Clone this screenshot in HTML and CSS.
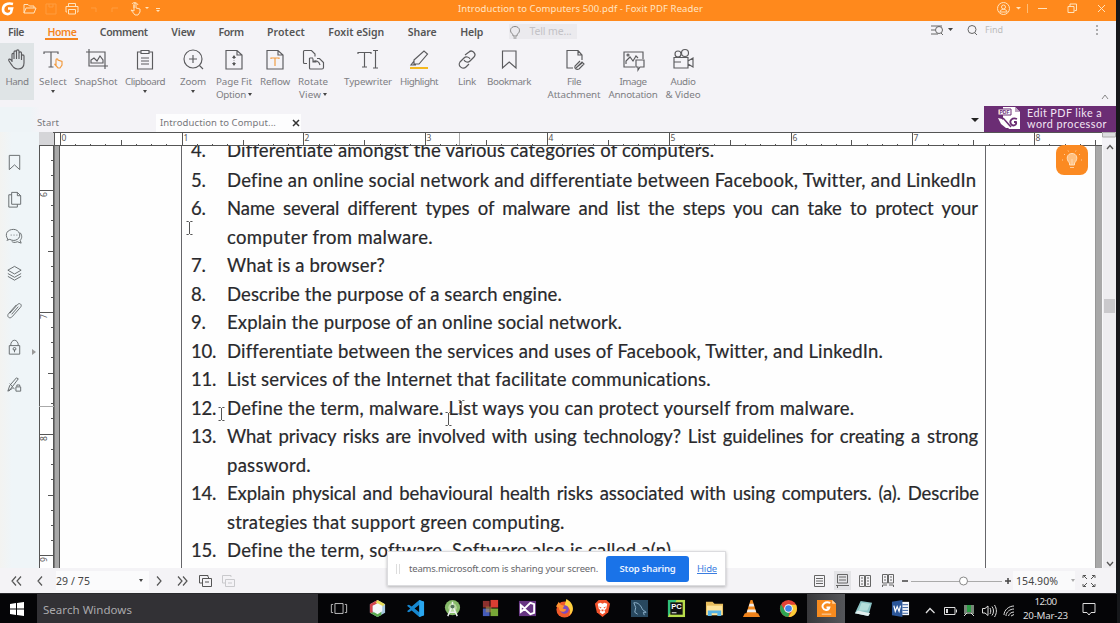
FILE: index.html
```html
<!DOCTYPE html>
<html lang="en">
<head>
<meta charset="utf-8">
<title>Introduction to Computers 500.pdf - Foxit PDF Reader</title>
<link rel="stylesheet" href="styles.css">
</head>
<body>
<div class="screen">
<div class="window">
  <header class="titlebar">
    <svg class="quick" width="165" height="21" viewBox="0 0 165 21" fill="none" stroke="#ffe3bd" stroke-width="1">
      <path d="M13 4C7 2.500 3 5 3 9.500C3 14 8.500 15.500 11 12.500L12 8.500H8" stroke="#fff" stroke-width="2.600"/>
      <path d="M24 13V4.500H28L29.500 6H34V8M24 13L26 8H36L34 13Z"/>
      <g stroke="#ff9c3e"><path d="M46 4H56V14H46ZM49 4V7H53V4M91 8H96V12M112 12V8H118"/></g>
      <path d="M68.500 6V3.500H75.500V6M67 12H66V6.500H78V12H77M68.500 9.500H75.500V14H68.500Z"/>
      <path d="M134 8V4C134 3 136 3 136 4V8L140 9V12L138 15H135L131 10L134 11V5M132 4C133 2 137 2 138 5"/>
      <path d="M145 7H149L147 9Z M156 10H160L158 12Z" fill="#ffe3bd" stroke="none"/><path d="M156 8.500H160"/>
    </svg>
    <span class="title" data-w="245">Introduction to Computers 500.pdf - Foxit PDF Reader</span>
    <svg class="controls" width="120" height="21" viewBox="996 0 120 21" fill="none" stroke="#ffe3bd" stroke-width="1">
      <circle cx="1003.500" cy="8.500" r="6"/><circle cx="1003.500" cy="7" r="2"/><path d="M1000 12C1000 8.500 1007 8.500 1007 12Z"/>
      <path d="M1016 7H1021L1018.500 9.500Z" fill="#ffe3bd" stroke="none"/><path d="M1027.500 4V13" stroke="#ffbd75"/>
      <path d="M1038 8.500H1047M1068 6.500H1074V12.500H1068ZM1070 6V4H1076.500V10.500H1074.500M1098 5L1105 12M1105 5L1098 12"/>
    </svg>
  </header>

  <nav class="menu">
    <span data-w="16">File</span><span class="on" data-w="29">Home</span><span data-w="48">Comment</span><span data-w="24">View</span><span data-w="25">Form</span><span data-w="38">Protect</span><span data-w="56">Foxit eSign</span><span data-w="29">Share</span><span data-w="23">Help</span>
    <div class="tell"><svg width="12" height="14" viewBox="0 0 12 14" fill="none" stroke="#888"><path d="M4 9.500C0 7 1 1.500 6 1.500S12 7 8 9.500V11H4ZM4.500 13H7.500"/></svg><em data-w="42">Tell me...</em></div>
    <svg class="find" width="200" height="20" viewBox="916 22 200 20" fill="none" stroke="#666">
      <path d="M931 27H942M931 31H935M931 35H938"/><circle cx="939" cy="31" r="3.500"/><path d="M941 34L943 36"/><path d="M948 29H953L950.500 32Z" fill="#444" stroke="none"/>
      <circle cx="972" cy="30.500" r="4"/><path d="M975 34L977 36"/><path d="M1097 26V28M1097 30V32M1097 34V36"/>
      <text x="985" y="34" class="hint">Find</text>
    </svg>
  </nav>

  <section class="ribbon">
    <div class="tool on"><svg viewBox="0 0 24 24"><path d="M7 14V6.500C7 5 9 5 9 6.500V11V4C9 2.500 11.500 2.500 11.500 4V11V3C11.500 1.500 14 1.500 14 3V11V5C14 3.500 16.500 3.500 16.500 5V12V8C16.500 6.500 19 6.500 19 8V15C19 19 17 21 13 21C9 21 8 19 4 13C3 11 5 10 7 13"/></svg><span data-w="23">Hand</span></div>
    <div class="tool"><svg viewBox="0 0 24 24"><path d="M3 6V4H17V6M10 4V19M7.500 19H12.500"/><path stroke="#f29a3d" d="M15 18V12C15 10.500 17 10.500 17 12L21 13.500V17L19 20H17L13.500 16L15 17"/></svg><span data-w="28">Select</span><b></b></div>
    <div class="tool"><svg viewBox="0 0 24 24"><path d="M5 1V18H24M2 4H21V21M7 15V12L10 10L13 13L16 8L19 12V15Z"/></svg><span data-w="43">SnapShot</span></div>
    <div class="tool"><svg viewBox="0 0 24 24"><path d="M8 4H4.500V21H19.500V4H16M8 2.500H16V5.500H8ZM8 10H16M8 13H16M8 16H16"/></svg><span data-w="40">Clipboard</span><b></b></div>
    <div class="tool"><svg viewBox="0 0 24 24"><circle cx="12" cy="11" r="9"/><path d="M8 11H16M12 7V15M18.500 17.500L22 21"/></svg><span data-w="26">Zoom</span><b></b></div>
    <div class="tool"><svg viewBox="0 0 24 24"><path d="M4 2.500H15L20 7V21H4ZM15 2.500V7H20M12 8V11M12 14V17M12 12.200V12.800"/><path d="M10 10L12 7L14 10ZM10 15L12 18L14 15Z" fill="#555" stroke="none"/></svg><span data-w="36">Page Fit</span><span class="more"><i data-w="30">Option</i><b></b></span></div>
    <div class="tool"><svg viewBox="0 0 24 24"><path d="M4 2.500H15L20 7V21H4ZM15 2.500V7H20"/><path stroke="#f29a3d" d="M8 11V10H16V11M12 10V18"/></svg><span data-w="30">Reflow</span></div>
    <div class="tool"><svg viewBox="0 0 24 24"><path d="M6 15.500H3.500Q2.500 15.500 2.500 14.500V3.500Q2.500 2.500 3.500 2.500H10.500L14 6V8.500M8.500 10V20Q8.500 21 9.500 21H21Q22.500 21 22.500 19.500V14.500L18.500 10.500H16M8.500 10L12 10M19 17C18 13 15 12 12 13.500M12 10.500V14H15.500"/></svg><span data-w="30">Rotate</span><span class="more"><i data-w="22">View</i><b></b></span></div>
    <div class="tool"><svg viewBox="0 0 24 24"><path d="M2 6V4.500H15V6M8.500 4.500V19M6 19H11M17 2.500H22M19.500 2.500V20M17 20H22"/></svg><span data-w="48">Typewriter</span></div>
    <div class="tool"><svg viewBox="0 0 24 24"><path d="M7 12L17 3L20.500 6L12 16H7ZM7 13L4 17H9"/><path stroke="#f5b921" stroke-width="2" d="M3 20H21"/></svg><span data-w="38">Highlight</span></div>
    <div class="tool"><svg viewBox="0 0 24 24"><path d="M10 7L14 4C17 1 22 6 19 9L15 13C13 15 10 14 9 12M14 16L11 19C8 22 2 18 5 14L9 10C11 8 14 9 15 11"/></svg><span data-w="18">Link</span></div>
    <div class="tool"><svg viewBox="0 0 24 24"><path d="M5.500 3H19V20L12.200 14L5.500 20Z"/></svg><span data-w="44">Bookmark</span></div>
    <div class="tool"><svg viewBox="0 0 24 24"><path d="M11 20H5V2.500H16L20 7V12M16 2.500V7H20M14 20L20 14L22 16L17 21C15 22 12 21 13 18L18 13M15 19L20 15"/></svg><span data-w="14">File</span><span data-w="53">Attachment</span></div>
    <div class="tool"><svg viewBox="0 0 24 24"><path d="M14 19H3V4H22V11M5 16V13L9 9L12 13L15 8L17 10M15 12H23V19H19L17 22V19H15Z"/><circle cx="7" cy="7" r="1"/></svg><span data-w="27">Image</span><span data-w="49">Annotation</span></div>
    <div class="tool"><svg viewBox="0 0 24 24"><circle cx="7" cy="6" r="3"/><circle cx="14" cy="5" r="3.500"/><path d="M3 9.500H17V20H3ZM17 13L22 10V19L17 16M3 14H10"/></svg><span data-w="25">Audio</span><span data-w="35">&amp; Video</span></div>
    <svg class="fold" width="8" height="6" viewBox="0 0 8 6"><path d="M1 5L4 1L7 5" fill="none" stroke="#888"/></svg>
  </section>

  <section class="tabs">
    <span class="start" data-w="22">Start</span>
    <div class="tab"><span data-w="116">Introduction to Comput...</span><svg width="8" height="8" viewBox="0 0 8 8"><path d="M1 1L7 7M7 1L1 7" stroke="#333" stroke-width="1.500"/></svg></div>
    <div class="arrow"></div>
    <div class="promo">
      <svg width="24" height="24" viewBox="0 0 24 24"><path d="M6 1H18L23 6V23H12L6 15Z" fill="#fff"/><path d="M1 3H14V9H1Z" fill="#fff" stroke="#6b2d74"/><text x="2.500" y="8.200" class="pdf">PDF</text><path d="M1 12L5 13L13 22H9L4 18Z" fill="#fff"/><path d="M6 12L14 21" stroke="#6b2d74" stroke-width="1.500"/><path d="M20 13C15 11 12 15 14 18S20 19 19 16H17" fill="none" stroke="#6b2d74" stroke-width="1.800"/><path d="M18 1V6H23" fill="#bda2c1"/></svg>
      <p><span data-w="75">Edit PDF like a</span><br><span data-w="80">word processor</span></p>
    </div>
  </section>

  <main class="work">
    <aside class="side">
      <svg viewBox="0 0 20 20"><path d="M4.500 2.500H15.500V17.500L10 12.500L4.500 17.500Z"/></svg>
      <svg viewBox="0 0 20 20"><path d="M7 2.500H13L16.500 6V15H7ZM13 2.500V6H16.500M7 5H4V18H13V15"/></svg>
      <svg viewBox="0 0 20 20"><path d="M3 13C-1 7 3 2.500 9 2.500C15 2.500 18 10 13 13C10 15 7 14 5 13L2 14ZM16 6C19 10 17 13 16 14L17 17L13 15.500C10 17 8 16 7 15M6 8.500H7M9 8.500H10M12 8.500H13"/></svg>
      <svg viewBox="0 0 20 20"><path d="M10 2.500L17 6.500L10 10.500L3 6.500ZM3 10L10 14L17 10M3 13L10 17L17 13"/></svg>
      <svg viewBox="0 0 20 20"><path d="M5 13L13 4C15 1 19 4 16 7L8 16C5 20 1 16 4 13L12 4M7 14L14 6"/></svg>
      <svg viewBox="0 0 20 20"><path d="M4.500 8H15.500V17H4.500ZM6 8C6 0.500 14 0.500 14 8M10 12V15"/><circle cx="10" cy="11.500" r="1.500"/></svg>
      <svg viewBox="0 0 20 20"><path d="M3 17L5 11L12 3L14 4L8 12L4 17M5 9L10 15M3 17L8 14M11.500 12.500H16.500V17H11.500ZM12.500 12V10.500H15.500V12"/></svg>
      <div class="grip"></div>
    </aside>
    <div class="view">
      <svg class="hruler" id="hruler" width="1077" height="14" viewBox="39 132 1077 14"></svg>
      <div class="pane">
        <svg class="vruler" id="vruler" width="15" height="422" viewBox="39 146 15 422"></svg>
        <div class="edge left"></div>
        <article class="page">
          <ol class="questions">
            <li class="first"><span>4.</span><p data-w="487">Differentiate amongst the various categories of computers.</p></li>
            <li><span>5.</span><p data-w="748">Define an online social network and differentiate between Facebook, Twitter, and LinkedIn</p></li>
            <li><span>6.</span><p data-w="751" class="spread">Name several different types of malware and list the steps you can take to protect your</p></li>
            <li><span></span><p data-w="206">computer from malware.</p></li>
            <li><span>7.</span><p data-w="158">What is a browser?</p></li>
            <li><span>8.</span><p data-w="335">Describe the purpose of a search engine.</p></li>
            <li><span>9.</span><p data-w="395">Explain the purpose of an online social network.</p></li>
            <li><span>10.</span><p data-w="655">Differentiate between the services and uses of Facebook, Twitter, and LinkedIn.</p></li>
            <li><span>11.</span><p data-w="484">List services of the Internet that facilitate communications.</p></li>
            <li><span>12.</span><p data-w="627">Define the term, malware. List ways you can protect yourself from malware.</p></li>
            <li><span>13.</span><p data-w="751" class="spread">What privacy risks are involved with using technology? List guidelines for creating a strong</p></li>
            <li><span></span><p data-w="84">password.</p></li>
            <li><span>14.</span><p data-w="752" class="spread">Explain physical and behavioural health risks associated with using computers. (a). Describe</p></li>
            <li><span></span><p data-w="338">strategies that support green computing.</p></li>
            <li><span>15.</span><p data-w="443">Define the term, software. Software also is called a(n)</p></li>
          </ol>
        </article>
        <div class="edge right"></div>
        <div class="scroll">
          <svg width="8" height="8" viewBox="0 0 8 8"><path d="M1 6L4 2.500L7 6" fill="none" stroke="#555" stroke-width="1.300"/></svg>
          <div class="thumb"></div>
          <svg width="8" height="8" viewBox="0 0 8 8"><path d="M1 2L4 5.500L7 2" fill="none" stroke="#555" stroke-width="1.300"/></svg>
        </div>
      </div>
    </div>
  </main>

  <footer class="status">
    <svg width="56" height="25" viewBox="0 568 56 25" fill="none" stroke="#555" stroke-width="1.200"><path d="M16 576.500L12 581L16 585.500M21 576.500L17 581L21 585.500M42 576.500L38 581L42 585.500"/></svg>
    <div class="pageno"><span data-w="34">29 / 75</span><b></b></div>
    <svg width="90" height="25" viewBox="149 568 90 25" fill="none" stroke="#555" stroke-width="1.200"><path d="M157 576.500L161 581L157 585.500M178 576.500L182 581L178 585.500M183 576.500L187 581L183 585.500"/><path stroke-width="1" d="M202 583H199.500V575.500H208V577M202.500 578.500H211.500V586.500H202.500ZM205 582H209M207 579L209 577"/><path stroke="#c9c9cc" stroke-width="1" d="M225 583H222.500V575.500H231V577M225.500 579.500H234.500V586.500H225.500ZM228 583H232"/></svg>
    <svg class="zoombar" width="204" height="25" viewBox="809 568 204 25" fill="none" stroke="#666">
      <path d="M814.500 575.500H824.500V586.500H814.500ZM816 578.500H823M816 581H823M816 583.500H823"/>
      <path d="M834 571H851V590H834Z" fill="#e3e3e6" stroke="none"/><path d="M837.500 574.500H847.500V583H837.500ZM839 577H846M839 580H846M836 585.500H849M837.500 588V586"/>
      <path d="M859.500 575.500H864.500V586.500H859.500ZM865.500 575.500H870.500V586.500H865.500ZM861 578H863M861 581H863M861 584H863M867 578H869M867 581H869M867 584H869"/>
      <path d="M882.500 574.500H887.500V583H882.500ZM888.500 574.500H893.500V583H888.500ZM884 577H886M884 580H886M890 577H892M890 580H892M882.500 587V585H887M893.500 587V585H889"/>
      <path stroke="#444" stroke-width="1.500" d="M902 581H908M1005 581H1011M1008 578V584"/><path stroke="#aaa" d="M911 581.500H1002"/><circle cx="963.500" cy="581" r="4" fill="#fff" stroke="#888"/>
    </svg>
    <div class="zoomval"><span data-w="42">154.90%</span><b></b></div>
    <svg width="16" height="16" viewBox="0 0 16 16" fill="none" stroke="#555"><path d="M2 5V2.500H5M2 2L6 6M11 2.500H14V5M14 2L10 6M2 11V13.500H5M2 14L6 10M14 11V13.500H11M14 14L10 10"/></svg>
  </footer>

  <button class="bulb"><svg width="22" height="22" viewBox="0 0 22 22" fill="#ffc080" stroke="#ffe0bd"><path d="M8.500 14C4.500 10 6 4.500 11 4.500S17.500 10 13.500 14V16H8.500Z"/><path d="M9 18.500H13M11 10V16M3 5L4 6M18 5L19 6M1 11H2M20 11H21M7 1.500L7.500 2.500M15 1.500L14.500 2.500" stroke-width=".8"/></svg></button>
  <svg class="ibeam a" viewBox="0 0 7 14"><path d="M0.500 0.500H2.500L3.500 1.500L4.500 0.500H6.500M3.500 1V13M0.500 13.500H2.500L3.500 12.500L4.500 13.500H6.500"/></svg>
  <svg class="ibeam b" viewBox="0 0 7 14"><path d="M0.500 0.500H2.500L3.500 1.500L4.500 0.500H6.500M3.500 1V13M0.500 13.500H2.500L3.500 12.500L4.500 13.500H6.500"/></svg>
  <svg class="ibeam c" viewBox="0 0 7 14"><path d="M0.500 0.500H2.500L3.500 1.500L4.500 0.500H6.500M3.500 1V13M0.500 13.500H2.500L3.500 12.500L4.500 13.500H6.500"/></svg>
  <svg class="ibeam d" viewBox="0 0 7 14"><path d="M0.500 0.500H2.500L3.500 1.500L4.500 0.500H6.500M3.500 1V13M0.500 13.500H2.500L3.500 12.500L4.500 13.500H6.500"/></svg>

  <div class="sharing">
    <div class="handle"></div>
    <span class="msg" data-w="189">teams.microsoft.com is sharing your screen.</span>
    <button><span data-w="56">Stop sharing</span></button>
    <a data-w="20">Hide</a>
  </div>
</div>

<div class="taskbar">
  <div class="winkey"><svg width="14" height="14" viewBox="0 0 14 14" fill="#fff"><path d="M0 2L6 1V6.500H0ZM7 1L14 0V6.500H7ZM0 7.500H6V13L0 12ZM7 7.500H14V14L7 13Z"/></svg></div>
  <div class="search"><span data-w="89">Search Windows</span></div>
  <div class="app tv"><svg viewBox="0 0 20 20" fill="none" stroke="#ccc"><path d="M5.500 4.500H14.500V15.500H5.500ZM3.500 5.500H1.500V14.500H3.500M16.500 5.500H18.500V14.500H16.500"/></svg></div>
  <div class="app"><svg viewBox="0 0 20 20"><path d="M10 1L18 5.500V14.500L10 19L2 14.500V5.500Z" fill="#a7c9df"/><path d="M10 1L2 5.500V14.500L5 15V7L11 5Z" fill="#d2434d"/><path d="M10 1L18 5.500L15 8L8 4Z" fill="#e6dc58"/><path d="M2 14.500L10 19L14 17V13L8 14Z" fill="#5cab4e"/><path d="M5 7L10 4.500L15 7V13L10 16L5 13Z" fill="#f5f8fa"/></svg></div>
  <div class="app"><svg viewBox="0 0 20 20"><path d="M14 1L19 3V17L14 19L6 12L3 14L1 13L4.500 10L1 7L3 6L6 8ZM14 6L9 10L14 14Z" fill="#1687cf" fill-rule="evenodd"/><path d="M14 1L19 3V17L14 19Z" fill="#2aa7ef"/></svg></div>
  <div class="app"><svg viewBox="0 0 20 20"><circle cx="10" cy="9" r="8" fill="#85b968"/><circle cx="10" cy="9" r="4.500" fill="#b9d9a0"/><path d="M10 7L5 18M10 7L15 18M6 14H14M10 3V8" stroke="#eef2f0" stroke-width="1.500"/><circle cx="10" cy="8" r="2" fill="#53705b"/></svg></div>
  <div class="app"><svg viewBox="0 0 20 20"><path d="M2 2H9V9H2Z" fill="#8c302e"/><path d="M10 1H18V9H10Z" fill="#d93e33"/><path d="M2 10H9V18H2Z" fill="#455bb8"/><path d="M10 10H18V18H10Z" fill="#78a737"/><path d="M5 8H11V14H5Z" fill="#c5a04d" opacity=".5"/></svg></div>
  <div class="app"><svg viewBox="0 0 20 20"><path d="M1 2H19V18H1Z" fill="#673582"/><path d="M3 6.500L7 10L13 4L17 5.500V14.500L13 16L7 10.500L3 13.500Z" fill="none" stroke="#fff" stroke-width="2"/></svg></div>
  <div class="app"><svg viewBox="0 0 20 20"><circle cx="10" cy="11" r="8.500" fill="#f05a2a"/><path d="M12 0C20 4 21 13 15 17C18 10 13 7 10 7Z" fill="#ffd13e"/><circle cx="10" cy="11" r="4.500" fill="#7d4cc1"/><path d="M1 8L4 3L6 6L10 7L8 10L12 11C10 15 4 14 4 9Z" fill="#ff9331"/></svg></div>
  <div class="app"><svg viewBox="0 0 20 20"><path d="M6 1H14L18 5L16 14L10 19L4 14L2 5Z" fill="#f1522b"/><path d="M5 5L8 4L10 5L12 4L15 5L14 10L12 12L13 14L10 16L7 14L8 12L6 10Z" fill="#fff"/><path d="M6 8L9 9L8 10ZM14 8L11 9L12 10ZM9 11H11V13H9Z" fill="#f1522b"/></svg></div>
  <div class="app"><svg viewBox="0 0 20 20"><path d="M1 1H19V19H1Z" fill="#28485f"/><path d="M4 4C9 3 12 8 13 11L17 14L14 14L15 17M4 4L6 9L5 14L8 16" fill="none" stroke="#8fb3cc"/></svg></div>
  <div class="app"><svg viewBox="0 0 20 20"><path d="M1 1H19V19H1Z" fill="#b8dc4a"/><path d="M1 1H10L1 19Z" fill="#2fbf7a"/><path d="M3.500 3.500H16.500V16.500H3.500Z" fill="#111"/><text x="4.500" y="11" class="pc">PC</text><path d="M5 14.500H10" stroke="#fff"/></svg></div>
  <div class="app"><svg viewBox="0 0 20 20"><path d="M1 3H8L10 5H19V17H1Z" fill="#e8bd5d"/><path d="M2 7H18V17H2Z" fill="#ffe49a"/><path d="M3 18V12H17V18H13V15H7V18Z" fill="#54b2e5"/></svg></div>
  <div class="app"><svg viewBox="0 0 20 20"><path d="M9 1H11L16 17H4Z" fill="#f28a20"/><path d="M8 5H12L13 8H7ZM6 11H14L15 14H5Z" fill="#eee"/><path d="M3 15H17L19 19H1Z" fill="#f0831b"/></svg></div>
  <div class="app"><svg viewBox="0 0 20 20"><circle cx="10" cy="10" r="9" fill="#e34234"/><path d="M2.200 5.500L6.500 13L11 14.500L10 19C3 19-1 11 2.200 5.500Z" fill="#2fa452"/><path d="M10 6H18C21 13 16 19 10 19L14 12Z" fill="#fbcb36"/><circle cx="10" cy="10" r="4.500" fill="#fff"/><circle cx="10" cy="10" r="3.500" fill="#4083e8"/></svg></div>
  <div class="app active"><svg viewBox="0 0 20 20"><path d="M0 1H16L20 5V19H0Z" fill="#f78b1f"/><path d="M16 1V5H20Z" fill="#ffd2a0"/><path d="M14 4C8 2 5 6 6 9S12 13 13 9H10" fill="none" stroke="#fff" stroke-width="2"/><path d="M5 16H15" stroke="#fbc184" stroke-width="1.500"/></svg></div>
  <div class="app"><svg viewBox="0 0 20 20"><path d="M7 2L19 4L15 18L1 15Z" fill="#8bc3c4"/><path d="M8 4L17 5L14 12L5 12Z" fill="#b5dfdb"/><path d="M1 15L15 18L17 15L4 12Z" fill="#e1eeee"/></svg></div>
  <div class="app"><svg viewBox="0 0 20 20"><path d="M10 3H19V17H10Z" fill="#f4f7fc"/><path d="M12 6H18M12 9H18M12 12H18M12 15H18" stroke="#355d9c"/><path d="M1 3L12 1V19L1 17Z" fill="#2b5699"/><path d="M3 7L4.500 13L6.500 8L8.500 13L10 7" fill="none" stroke="#fff" stroke-width="1.300"/></svg></div>
  <svg class="tray" width="101" height="30" viewBox="920 593 101 30" fill="none" stroke="#ddd">
    <path stroke-width="1.300" d="M927 612L931 607.500L935.500 612"/><path d="M945.500 606.500H956V613.500H945.500ZM957.500 608.500V611.500"/><path d="M947 608H949V612H947Z" fill="#ddd" stroke="none"/>
    <path d="M965 604H975V613H965Z" fill="#788679" stroke="none"/><path d="M968 604H972V611H968Z" fill="#2c9d45" stroke="none"/><path d="M965 615L968 612M975 615L972 612"/>
    <path d="M983.500 607.500H986L989 605V614.500L986 612H983.500ZM991 607C992 609 992 611 991 613M993 605.500C995 608 995 612 993 614.500M995.500 604C998 608 998 612 995.500 616"/>
    <path d="M1005 614C1005 609 1010 605 1015 605M1007 615C1007 611 1011 608 1015 608M1009.500 615C1010 613 1012 611 1015 611M1012 615L1015 613.500"/>
  </svg>
  <div class="clock"><span data-w="22">12:00</span><span data-w="45">20-Mar-23</span></div>
  <svg class="note" width="14" height="14" viewBox="0 0 14 14" fill="none" stroke="#ddd"><path d="M1 1.500H13V10.500H9L7 13L5 10.500H1Z"/></svg>
</div>
</div>
<script src="app.js"></script>
</body>
</html>
```
FILE: styles.css
```css
* { box-sizing: border-box; }
body { margin: 0; background: #17181b; font-family: "Noto Sans", "Open Sans", sans-serif; overflow: hidden; }
p, ol { margin: 0; padding: 0; }
button { border: 0; padding: 0; font: inherit; }
[data-w] { white-space: nowrap; display: inline-block; }
.screen { width: 1120px; height: 623px; }
.window { position: relative; width: 1116px; height: 593px; display: flex; flex-direction: column; background: #f4f3f7; }
b { display: inline-block; border: 2.500px solid transparent; border-top: 3px solid #444; border-bottom: 0; }

.titlebar { height: 21px; background: #ff891c; display: flex; color: #ffe5c4; }
.title { font-size: 9.500px; line-height: 18px; width: 245px; margin-left: 293px; }
.controls { margin-left: auto; }

.menu { height: 22px; display: flex; gap: 23.400px; padding-left: 8px; font-size: 10.500px; font-weight: 600; color: #555; line-height: 22px; }
.menu .on { color: #f5851f; height: 19px; box-shadow: inset 0 -2px #f5851f; margin: 0 -2px; padding: 0 2px; }
.tell { display: flex; align-items: center; gap: 9px; width: 68px; height: 15px; margin: 3px 0 0 2px; background: #ebeaee; line-height: 15px; }
.tell em { font-style: normal; font-weight: 400; color: #c3c2c6; }
.find { margin-left: auto; }
.hint { font-size: 9px; font-weight: 400; fill: #bbb; stroke: none; }

.ribbon { height: 64px; display: flex; align-items: flex-start; color: #7e7e83; font-size: 9.800px; }
.tool { height: 57px; padding-top: 5px; display: flex; flex-direction: column; align-items: center; width: 34px; line-height: 13px; }
.tool.on { background: #dfe4e6; }
.tool > svg { width: 24px; height: 24px; margin-bottom: 3px; fill: none; stroke: #5b5b5e; stroke-width: 1.150; flex: none; }
.tool > b { margin-top: 2px; }
.tool i { font-style: normal; }
.more { display: flex; align-items: center; gap: 2px; }
.tool:nth-child(2) { margin-left: 2px; }
.tool:nth-child(3) { width: 44px; margin-left: 4px; }
.tool:nth-child(4) { width: 42px; margin-left: 6px; }
.tool:nth-child(5) { width: 30px; margin-left: 12px; }
.tool:nth-child(6) { width: 38px; margin-left: 7px; }
.tool:nth-child(7) { width: 32px; margin-left: 6px; }
.tool:nth-child(8) { width: 32px; margin-left: 6px; }
.tool:nth-child(9) { width: 50px; margin-left: 14px; }
.tool:nth-child(10) { width: 42px; margin-left: 5px; }
.tool:nth-child(11) { width: 30px; margin-left: 12px; }
.tool:nth-child(12) { width: 46px; margin-left: 4px; }
.tool:nth-child(13) { width: 56px; margin-left: 14px; }
.tool:nth-child(14) { width: 52px; margin-left: 5px; }
.tool:nth-child(15) { width: 38px; margin-left: 5px; }
.fold { margin: 51px 7px 0 auto; }

.tabs { height: 25px; display: flex; align-items: flex-end; font-size: 9.500px; color: #77777b; background: linear-gradient(90deg, #eef4f7 30px, #f4f3f7 40px); }
.start { width: 22px; margin-left: 37px; line-height: 19px; }
.tab { margin-left: 97px; width: 145px; height: 18px; background: #fdfdfe; display: flex; align-items: center; gap: 16px; padding-left: 4px; line-height: 14px; padding-bottom: 1px; }
.arrow { margin: 0 5px 10px auto; border: 4px solid transparent; border-top-color: #222; border-bottom: 0; }
.promo { width: 132px; height: 26px; background: #6b2d74; color: #f3e6f4; display: flex; gap: 6px; padding: 0 0 2px 13px; align-items: center; font: 10.800px/11px Lato, sans-serif; }
.promo span { vertical-align: top; }
.pdf { font: bold 5px "Liberation Sans", sans-serif; fill: #6b2d74; }

.work { height: 436px; display: flex; background: #f4f3f7; }
.side { width: 39px; background: linear-gradient(90deg, #f3f3f1, #eff5f8 12px); display: grid; grid-template-columns: 28px 11px; grid-auto-rows: 37px; padding-top: 12px; align-items: center; }
.side svg { grid-column: 1; width: 19px; height: 19px; margin-left: 5px; fill: none; stroke: #656a6d; }
.grip { grid-column: 2; grid-row: 6; border: 3px solid transparent; border-left: 4px solid #999; width: 4px; margin: 9px 0 0 4px; }
.view { width: 1077px; display: flex; flex-direction: column; }
.hruler { display: block; flex: none; }
.hruler text, .vruler text { font: 8.500px "Noto Sans", sans-serif; fill: #555; }
.pane { height: 422px; display: flex; }
.vruler { display: block; flex: none; }
.edge { flex: none; background: #a8a8a8; }
.edge.left { width: 6px; border-right: 1px solid #555; border-left: 1px solid #777; }
.edge.right { width: 7px; border-left: 1px solid #969696; }
.page { width: 1035px; background: #fefefe; overflow: hidden; padding: 0 109px 0 121px; }
.questions { display: flow-root; height: 422px; list-style: none; border: solid #66666a; border-width: 0 1px; padding-left: 9px; font: 18.500px/28.500px Lato, Carlito, sans-serif; color: #29292c; -webkit-text-stroke: .2px #29292c; }
.questions li { display: flex; height: 28.500px; }
.questions li.first { margin-top: -10px; margin-bottom: 1.200px; }
.questions span { flex: none; width: 36px; letter-spacing: -.2px; }
.questions p { flex: none; }
.scroll { width: 14px; background: #eeedf0; border: solid #f9f9fb; border-width: 0 0 0 1px; display: flex; flex-direction: column; align-items: center; flex: none; }
.scroll .thumb { width: 11px; height: 14px; background: #cac9cc; margin: 148px 0 auto; }
.scroll svg:first-child { margin-top: -3px; }

.status { height: 25px; display: flex; align-items: center; background: #f4f3f6; font-size: 10.500px; color: #444; }
.pageno { width: 93px; height: 19px; display: flex; justify-content: space-between; align-items: center; background: #fbfbfc; padding-right: 6px; }
.zoombar { margin-left: auto; }
.zoomval { width: 62px; margin-right: 6px; padding-left: 3px; display: flex; align-items: center; justify-content: space-between; height: 19px; background: #fafafb; }
.zoomval b { border-top-color: #aaa; }
.status > svg:last-child { margin-right: 19px; }

.bulb { position: absolute; left: 1056px; top: 145px; width: 32px; height: 30px; border-radius: 8px; background: #fb8a22; display: grid; place-items: center; }
.ibeam { position: absolute; width: 7px; height: 14px; fill: none; stroke: #555; }
.ibeam.a { left: 186px; top: 221px; }
.ibeam.b { left: 218px; top: 407px; }
.ibeam.c { left: 445px; top: 412px; }
.ibeam.d { left: 458px; top: 400px; stroke: #777; }

.sharing { position: absolute; left: 387px; top: 551px; width: 339px; height: 35px; background: #fff; border: 1px solid #dcdcdf; box-shadow: 0 1px 3px #0004; display: flex; align-items: center; font-size: 9.500px; color: #66666a; }
.handle { width: 4px; height: 10px; margin: 0 9px 0 8px; border: solid #ddd; border-width: 0 1px; }
.sharing button { width: 83px; height: 26px; margin: 0 8px 0 8px; border-radius: 3px; background: #1a73e8; color: #e9f1ff; font-weight: 600; }
.sharing a { color: #3b7de0; text-decoration: underline; }

.taskbar { height: 30px; width: 1117px; display: flex; align-items: center; background: #050507; border-top: 1px solid #29292c; }
.winkey { width: 37px; flex: none; display: grid; place-items: center; padding-right: 4px; }
.search { width: 281px; flex: none; height: 29px; background: #323135; color: #aaa9ac; font-size: 11.500px; line-height: 31px; padding-left: 6px; }
.app { width: 37.350px; height: 29px; display: grid; place-items: center; flex: none; }
.app svg { width: 19px; height: 19px; }
.app.tv { width: 41.300px; }
.app.tv svg { width: 18px; }
.app.active { background: linear-gradient(90deg, #38383b, #55565a); }
.tray { flex: none; }
.pc { font: bold 8px "Liberation Sans", sans-serif; fill: #fff; }
.clock { width: 50px; flex: none; display: flex; flex-direction: column; align-items: center; font-size: 9.800px; line-height: 14px; color: #ddd; }
.note { margin-left: 12px; flex: none; }
```
FILE: app.js
```js
// Track text to its column width: letters normally, words on justified lines.
document.querySelectorAll('[data-w]').forEach(function (el) {
  var range = document.createRange();
  range.selectNodeContents(el);
  var text = el.textContent;
  var target = +el.dataset.w;
  if (el.classList.contains('spread')) {
    el.style.letterSpacing = '-0.07px';
    el.style.wordSpacing = (target - range.getBoundingClientRect().width) / (text.split(' ').length - 1) + 'px';
  } else {
    el.style.letterSpacing = (target - range.getBoundingClientRect().width) / text.length + 'px';
  }
});

// Inch rulers with eighth-inch ticks.
var inch = 121.8;
function line(x1, y1, x2, y2, color) {
  return '<path stroke="' + (color || '#555') + '" d="M' + x1 + ' ' + y1 + 'L' + x2 + ' ' + y2 + '"/>';
}
var h = '<path fill="#d5d5d8" d="M39 132H54V146H39Z"/><path fill="#fff" d="M54 132H1102V146H54Z"/>';
h += line(53, 132.5, 1102, 132.5) + line(39, 145.5, 1102, 145.5) + line(54.5, 132, 54.5, 146);
for (var i = 0; i <= 68; i++) {
  var x = Math.floor(60.3 + i * inch / 8) + 0.5;
  if (x > 1097) break;
  h += line(x, i % 8 === 0 ? 132 : i % 4 === 0 ? 140 : 144, x, 145);
  if (i % 8 === 0) h += '<text x="' + (x + 1) + '" y="141">' + i / 8 + '</text>';
}
h += line(459.5, 133, 459.5, 145, '#aaa') + '<path fill="#dddde0" stroke="#aaa" d="M1102.500 132.500H1115.500V137H1102.500Z"/>';
document.getElementById('hruler').innerHTML = h;

var v = '<path fill="#fff" d="M39 146H54V568H39Z"/>' + line(39.5, 146, 39.5, 568) + line(53.5, 146, 53.5, 568);
for (var j = -2; j <= 24; j++) {
  var y = Math.floor(190.5 + j * inch / 8) + 0.5;
  v += line(j % 8 === 0 ? 39 : j % 4 === 0 ? 48 : 51, y, 54, y);
  if (j % 8 === 0) v += '<text transform="translate(47 ' + (y + 6.5) + ') rotate(-90)">' + (6 + j / 8) + '</text>';
}
v += line(39, 406.5, 54, 406.5, '#aaa');
document.getElementById('vruler').innerHTML = v;
```
